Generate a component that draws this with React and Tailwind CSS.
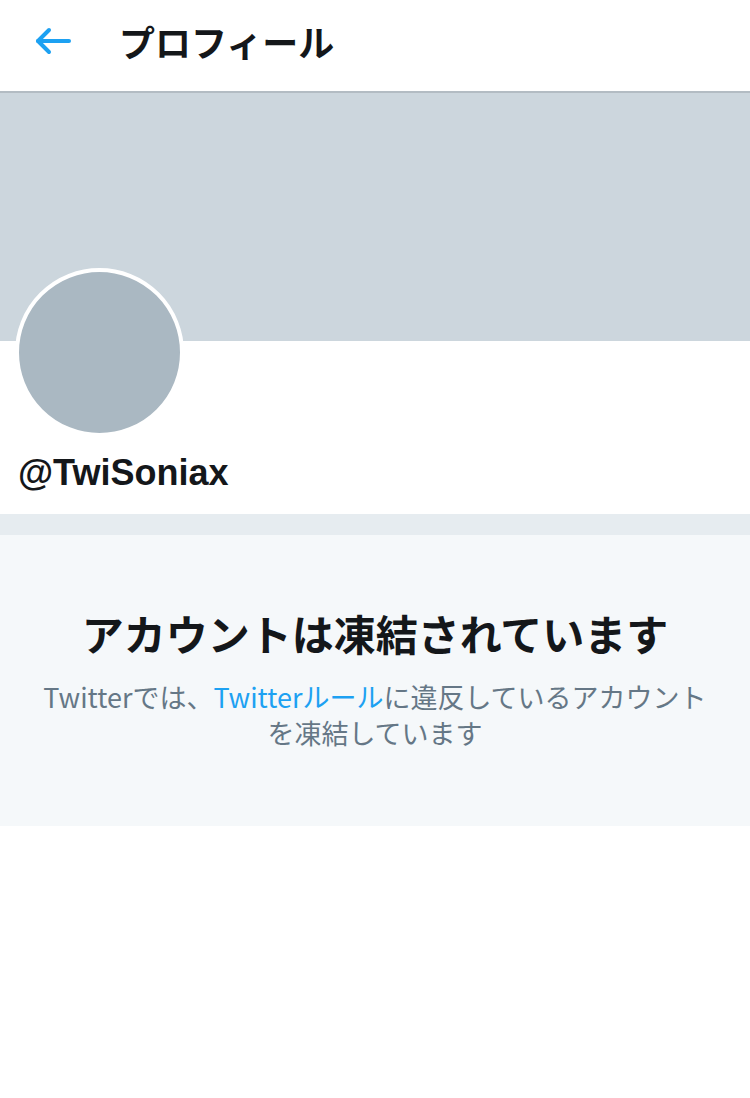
import React from 'react';

const jp = { fontFamily: '"Noto Sans CJK JP", "Noto Sans", sans-serif' };
const latin = { fontFamily: '"Liberation Sans", "Noto Sans CJK JP", sans-serif' };

function BackArrow() {
  return (
    <svg width="38" height="30" viewBox="0 0 38 30" fill="none" stroke="#1da1f2" strokeWidth="4" strokeLinecap="round" strokeLinejoin="round">
      <path d="M35 15H4" />
      <path d="M15 4L4 15l11 11" />
    </svg>
  );
}

export default function App() {
  return (
    <div className="w-[750px] min-h-[1098px] bg-white" style={jp}>
      {/* header */}
      <div className="h-[93px] pb-[10px] flex items-center border-b-2 border-[#b3bcc3]">
        <div className="w-[119px] pl-[34px] flex items-center">
          <BackArrow />
        </div>
        <h1 className="text-[36px] font-bold text-[#14171a] leading-none">プロフィール</h1>
      </div>

      {/* banner */}
      <div className="h-[248px] bg-[#ccd6dd]" />

      {/* avatar + name */}
      <div className="px-[15px] pb-[21px]">
        <div className="mt-[-73px] w-[169px] h-[169px] rounded-full bg-[#aab8c2] border-4 border-white" />
        <div className="mt-[16px] pl-[3px] text-[36px] font-bold text-[#14171a] leading-[40px]" style={latin}>
          @TwiSoniax
        </div>
      </div>

      {/* separator */}
      <div className="h-[21px] bg-[#e6ecf0]" />

      {/* suspended notice */}
      <div className="h-[291px] bg-[#f5f8fa] flex flex-col items-center pt-[73px] px-[40px] text-center">
        <h2 className="text-[42px] font-bold text-[#14171a] leading-[50px]">アカウントは凍結されています</h2>
        <p className="mt-[21px] text-[27px] leading-[36px] text-[#657786]">
          Twitterでは、<span className="text-[#1da1f2]">Twitterルール</span>に違反しているアカウント
          <br />
          を凍結しています
        </p>
      </div>
    </div>
  );
}
